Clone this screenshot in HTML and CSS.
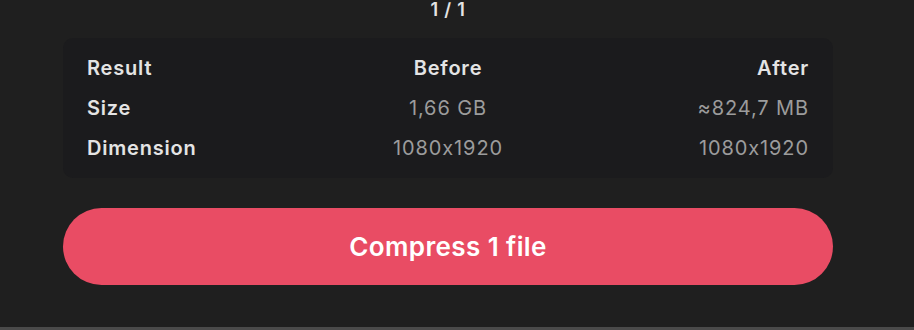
FILE: index.html
```html
<!DOCTYPE html>
<html>
<head>
<meta charset="utf-8">
<link rel="stylesheet" href="styles.css">
</head>
<body>
<div class="wrap">
  <div class="counter">1 / 1</div>
  <div class="card">
    <div class="row head">
      <span class="c1">Result</span><span class="c2">Before</span><span class="c3">After</span>
    </div>
    <div class="row">
      <span class="c1">Size</span><span class="c2 val">1,66 GB</span><span class="c3 val">≈824,7 MB</span>
    </div>
    <div class="row">
      <span class="c1">Dimension</span><span class="c2 val">1080x1920</span><span class="c3 val">1080x1920</span>
    </div>
  </div>
  <button class="btn">Compress 1 file</button>
</div>
<div class="bottom"></div>
</body>
</html>
```
FILE: styles.css
```css
html, body {
  margin: 0;
  height: 100%;
}
body {
  background: #1f1f1f;
  font-family: Inter, "Noto Sans", sans-serif;
  font-feature-settings: "calt" 0;
  color: #e4e4e4;
  position: relative;
  overflow: hidden;
}
.wrap {
  width: 770px;
  margin-left: 63px;
  display: flex;
  flex-direction: column;
}
.counter {
  text-align: center;
  font-size: 18px;
  font-weight: 600;
  letter-spacing: 0.8px;
  line-height: 20px;
  height: 38px;
}
.card {
  background: #1b1b1d;
  border-radius: 10px;
  padding: 10px 24px 10px 24px;
  height: 140px;
  box-sizing: border-box;
}
.row {
  display: grid;
  grid-template-columns: 1fr 1fr 1fr;
  height: 40px;
  align-items: center;
  font-size: 20px;
  letter-spacing: 0.8px;
}
.c1 {
  font-weight: 600;
  color: #e4e4e4;
}
.c2 {
  text-align: center;
}
.c3 {
  text-align: right;
}
.head span {
  font-weight: 600;
  color: #e4e4e4;
}
.val {
  color: #9c9c9c;
  font-weight: 400;
  letter-spacing: 0.9px;
}
.btn {
  margin-top: 30px;
  height: 77px;
  border: none;
  border-radius: 39px;
  background: #e94c64;
  color: #ffffff;
  font-family: Inter, "Noto Sans", sans-serif;
  font-feature-settings: "calt" 0;
  font-size: 26px;
  font-weight: 600;
  letter-spacing: 0.4px;
  cursor: pointer;
}
.bottom {
  position: absolute;
  left: 0;
  right: 0;
  bottom: 0;
  height: 3px;
  background: #4a4a4a;
}
```
